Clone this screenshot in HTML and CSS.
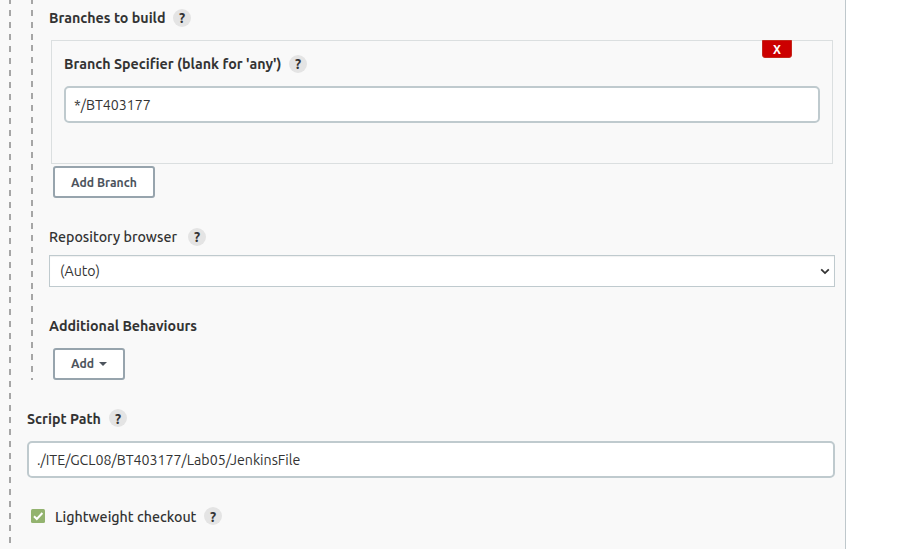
FILE: index.html
```
<!DOCTYPE html>
<html lang="en">
<head>
<meta charset="utf-8">
<title>Pipeline configuration</title>
<link rel="stylesheet" href="styles.css">
</head>
<body>
<main class="panel">
  <div class="outer-group">
    <section class="inner-group">
      <div class="label-row branches"><span class="label t-branches">Branches to build</span><span class="help">?</span></div>
      <div class="repeat">
        <button class="delete">X</button>
        <div class="label-row specifier"><span class="label t-specifier">Branch Specifier (blank for 'any')</span><span class="help">?</span></div>
        <div class="input"><span class="t-branch">*/BT403177</span></div>
      </div>
      <button class="button add-branch"><span class="t-addbranch">Add Branch</span></button>
      <div class="label-row browser"><span class="label medium t-browser">Repository browser</span><span class="help">?</span></div>
      <div class="select"><span class="t-auto">(Auto)</span>
        <svg class="chevron" width="10" height="7" viewBox="0 0 10 7"><path d="M1.2 1.3 5 5.1 8.8 1.3" fill="none" stroke="#333" stroke-width="1.8"/></svg>
      </div>
      <div class="label-row behaviours"><span class="label t-behaviours">Additional Behaviours</span></div>
      <button class="button add"><span class="t-add">Add</span><svg width="8" height="4" viewBox="0 0 8 4"><path d="M0 0h8L4 4z" fill="#4d545d"/></svg></button>
    </section>
    <div class="label-row script"><span class="label t-script">Script Path</span><span class="help">?</span></div>
    <div class="input path"><span class="t-path">./ITE/GCL08/BT403177/Lab05/JenkinsFile</span></div>
    <div class="label-row checkout">
      <svg class="check" width="14" height="14" viewBox="0 0 14 14"><rect width="14" height="14" rx="1.5" fill="#93b36f"/><path d="m3 7.2 2.8 2.8 5.6-6" fill="none" stroke="#fff" stroke-width="2"/></svg>
      <span class="label medium t-checkout">Lightweight checkout</span><span class="help">?</span>
    </div>
  </div>
</main>
</body>
</html>
```
FILE: styles.css
```
* { box-sizing: border-box; }
body {
  margin: 0;
  background: #fff;
  color: #333;
  font: 14.2px/20px Ubuntu, "Noto Sans", sans-serif;
  overflow: hidden;
}
.panel {
  width: 846px;
  height: 549px;
  padding: 0 10px 0 9px;
  background: #f9f9f9;
  border-right: 1px solid #bfc8cc;
}
.outer-group {
  height: 543px;
  padding-left: 18px;
  background: repeating-linear-gradient(#a6a6a6 0 6px, transparent 6px 11.98px) 0 -2px / 2px 560px no-repeat;
}
.inner-group {
  height: 380px;
  margin-left: 4px;
  padding-left: 18px;
  background: repeating-linear-gradient(#a6a6a6 0 6px, transparent 6px 11.86px) 0 -2px / 2px 400px no-repeat;
}
.label-row { display: flex; align-items: center; height: 20px; }
.label { font-size: 14.25px; font-weight: 700; white-space: nowrap; }
.medium { font-weight: 500; }
.help {
  width: 18px;
  height: 18px;
  margin-left: 8px;
  border-radius: 50%;
  background: #e4e4e4;
  font-size: 14px;
  font-weight: 700;
  line-height: 18px;
  text-align: center;
}
.branches { height: 40px; padding-bottom: 4px; }
.repeat {
  position: relative;
  width: 782px;
  height: 124px;
  margin-left: 2px;
  padding: 13px 12px 0;
  border: 1px solid #dbdfe0;
}
.delete {
  position: absolute;
  top: -1px;
  right: 40px;
  width: 30px;
  height: 18px;
  padding: 1px 0 0;
  border: 1px solid #c4281c;
  border-radius: 0 0 3px 3px;
  background: #c00;
  color: #fff;
  font: 700 12px/16px Ubuntu, "Noto Sans", sans-serif;
}
.input {
  height: 37px;
  padding: 0 8px;
  border: 2px solid #bfcace;
  border-radius: 5px;
  background: #fff;
  line-height: 34px;
  white-space: nowrap;
}
.repeat .input { margin-top: 12px; }
.button {
  display: flex;
  align-items: center;
  height: 32px;
  margin-left: 4px;
  padding: 0 16px;
  border: 2px solid #97a4ad;
  border-radius: 3px;
  background: #fff;
  color: #4d545d;
  font: 700 12.2px/18px Ubuntu, "Noto Sans", sans-serif;
  white-space: nowrap;
}
.add-branch { width: 102px; margin-top: 2px; padding-top: 1px; }
.browser { margin-top: 29px; }
.browser .help { margin-left: 12px; }
.select {
  display: flex;
  align-items: center;
  justify-content: space-between;
  height: 32px;
  margin-top: 8px;
  padding: 0 4px 0 10px;
  border: 1px solid #bfcace;
  background: #fff;
  box-shadow: inset 0 1px 1px rgba(0, 0, 0, .06);
}
.behaviours { margin-top: 29px; }
.add { width: 72px; margin-top: 12px; gap: 5px; }
.script { margin-top: 28px; }
.script .label { padding-top: 2px; }
.path { margin-top: 13px; }
.checkout { margin-top: 28px; padding-left: 4px; }
.checkout .label { padding-top: 2px; }
.script .help, .checkout .help { line-height: 20px; }
.check { margin-right: 10px; flex: none; }
.t-branches { width: 116px; }
.t-specifier { width: 217px; }
.t-browser { width: 127px; }
.t-script { width: 74px; }
.t-checkout { width: 141px; }
.t-add { width: 23px; }
```
